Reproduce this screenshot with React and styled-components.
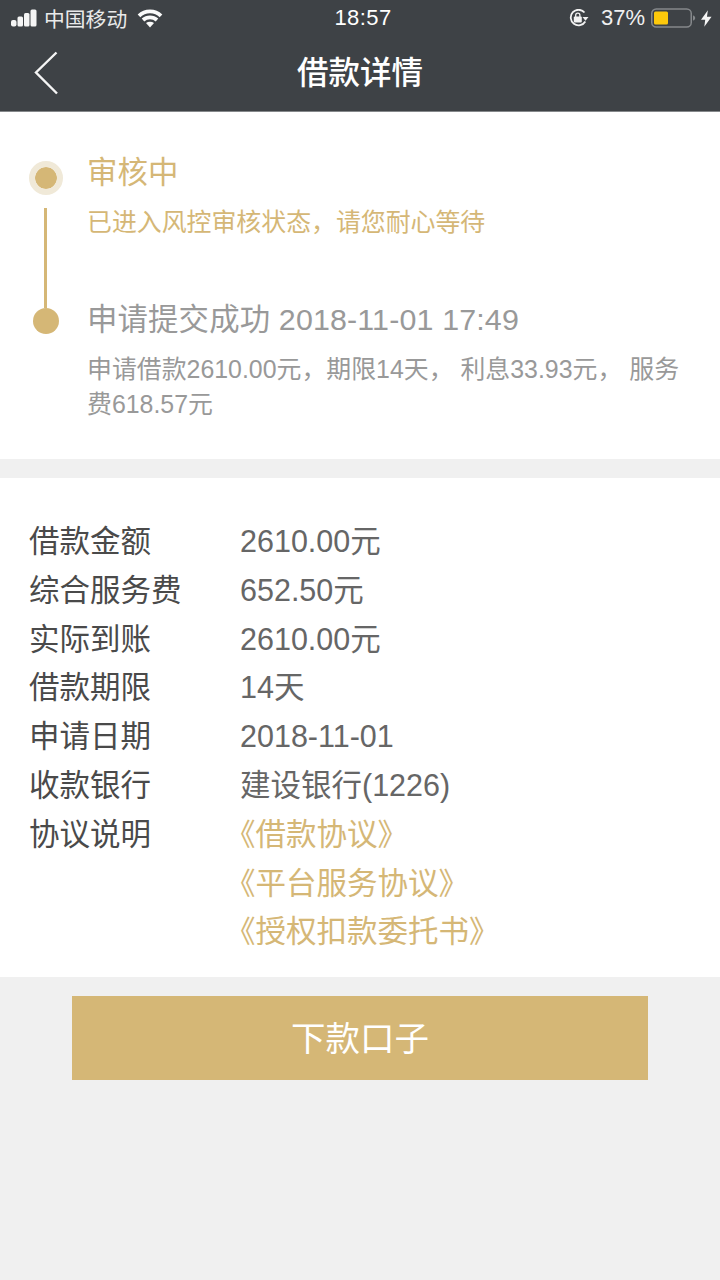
import React from "react";
import styled, { createGlobalStyle } from "styled-components";

const Global = createGlobalStyle`
  html, body { margin: 0; padding: 0; background: #f0f0f0; }
  body { font-family: "Liberation Sans", "Noto Sans CJK SC", sans-serif; }
`;
const Page = styled.div`
  width: 720px; height: 1280px; background: #f0f0f0; overflow: hidden;
  display: flex; flex-direction: column;
`;
const Header = styled.header`
  height: 111px; background: #3e4246; border-bottom: 1px solid #85888b; box-sizing: content-box;
  display: flex; flex-direction: column; color: #fff;
`;
const StatusBar = styled.div`
  height: 36px; display: flex; align-items: center; justify-content: space-between;
  padding: 0 8px 0 10px; position: relative;
`;
const StatusSide = styled.div`
  display: flex; align-items: center;
`;
const Carrier = styled.span`
  margin-left: 6px; margin-right: 10px; color: #e9eaea; font-size: 20.800px;
`;
const Time = styled.span`
  position: absolute; left: 6px; right: 0; text-align: center; font-size: 22px; letter-spacing: .4px; pointer-events: none;
`;
const Percent = styled.span`
  margin-left: 12px; margin-right: 6px; font-size: 22px; color: #f0f0f0;
`;
const NavBar = styled.div`
  flex: 1; display: flex; align-items: center; justify-content: center; position: relative; padding-bottom: 8px;
`;
const BackIcon = styled.svg`
  position: absolute; left: 34px; top: 15px;
`;
const Title = styled.h1`
  margin: 0; font-size: 31.500px; font-weight: 500; color: #fff;
`;
const Card = styled.section`
  background: #fff;
`;
const Timeline = styled(Card)`
  height: 347px; box-sizing: border-box; padding: 40px 30px 0 29px;
`;
const Step = styled.div`
  display: flex; height: ${p => p.$h}px;
`;
const Marker = styled.div`
  width: 34px; flex: none; display: flex; flex-direction: column; align-items: center; margin-right: 25px;
`;
const Dot = styled.span`
  border-radius: 50%; background: #d5b776; flex: none; box-sizing: content-box; margin-top: 9px;
  width: ${p => p.$halo ? 22 : 26}px; height: ${p => p.$halo ? 22 : 26}px;
  ${p => p.$halo && "border: 6px solid #f0e9d8; background-clip: padding-box;"}
`;
const Line = styled.span`
  width: 3.500px; background: #d5b776; height: 100px; margin-top: 13px; margin-left: -1px; flex: none;
`;
const StepBody = styled.div`
  min-width: 0; flex: 1; margin-left: -1px;
`;
const StepTitle = styled.div`
  font-size: 30.400px; line-height: 40px; letter-spacing: .15px; color: ${p => p.$on ? "#d5b776" : "#999"};
`;
const StepText = styled.div`
  font-size: 24.900px; line-height: 35px; color: ${p => p.$on ? "#d5b776" : "#999"}; margin-top: ${p => p.$mt}px;
`;
const Info = styled(Card)`
  height: 499px; box-sizing: border-box; margin-top: 19px; padding: 39px 30px 0;
`;
const Row = styled.div`
  display: grid; grid-template-columns: 210px 1fr; font-size: 30.500px; line-height: 48.800px; color: #666;
`;
const Label = styled.span`
  color: #4a4a4a; margin-left: -1px;
`;
const Links = styled.div`
  display: flex; flex-direction: column; margin-left: -15px; color: #d5b776;
`;
const Button = styled.button`
  display: block; margin: 19px auto 0; width: 576px; height: 84px; border: 0; padding: 0 0 4px; background: #d5b776;
  color: #fff; font: inherit; font-size: 34.500px;
`;

const Signal = () => (
  <svg width="28" height="18" viewBox="0 0 28 18" fill="#f5f5f5">
    <rect x="1" y="11" width="5.500" height="6.500" rx="2" />
    <rect x="7.500" y="7.500" width="5.500" height="10" rx="1.500" />
    <rect x="14" y="4" width="5.500" height="13.500" rx="1.500" />
    <rect x="20.500" y=".5" width="6" height="17" rx="1.500" />
  </svg>
);
const Wifi = () => (
  <svg width="26" height="19" viewBox="0 0 26 19" fill="none" stroke="#fafafa" strokeWidth="3.800">
    <path d="M2 6.800C8 1 18 1 24 6.800" />
    <path d="M6 11C10 7.400 16 7.400 20 11" />
    <path d="M13 18.500l-4-4.500c2.200-1.600 5.800-1.600 8 0z" fill="#fafafa" stroke="none" />
  </svg>
);
const RotationLock = () => (
  <svg width="20" height="18" viewBox="0 0 20 18" fill="none">
    <path d="M16.300 12.500A7.800 7.800 0 1 1 15.500 3.500" stroke="#f2f2f2" strokeWidth="1.800" />
    <path d="M13.500 8h6l-3 3.800z" fill="#f2f2f2" />
    <rect x="4.800" y="7.500" width="8" height="6" rx="1" fill="#f2f2f2" />
    <path d="M6.700 8V6.200a2.100 2.100 0 0 1 4.200 0V8" stroke="#f2f2f2" strokeWidth="1.300" />
  </svg>
);
const Battery = () => (
  <svg width="45" height="20" viewBox="0 0 45 20" fill="none">
    <rect x=".750" y="1" width="39.500" height="18" rx="4.500" stroke="#85888b" strokeWidth="1.500" />
    <rect x="3" y="3.500" width="14" height="13" rx="1.500" fill="#fdc90b" />
    <path d="M42 7.500c1.500.3 2.200 1.300 2.200 2.500s-.7 2.200-2.200 2.500z" fill="#85888b" />
  </svg>
);
const BoltIcon = styled.svg`
  margin-left: 5px;
`;
const Bolt = () => (
  <BoltIcon width="11" height="17" viewBox="0 0 12 18" fill="#f5f5f5">
    <path d="M7.500 0 0 10.300h4.600L3.600 18 11.500 7H6.500z" />
  </BoltIcon>
);

const rows = [
  ["借款金额", "2610.00元"],
  ["综合服务费", "652.50元"],
  ["实际到账", "2610.00元"],
  ["借款期限", "14天"],
  ["申请日期", "2018-11-01"],
  ["收款银行", "建设银行(1226)"],
];
const agreements = ["《借款协议》", "《平台服务协议》", "《授权扣款委托书》"];

export default function App() {
  return (
    <Page>
      <Global />
      <Header>
        <StatusBar>
          <StatusSide>
            <Signal />
            <Carrier>中国移动</Carrier>
            <Wifi />
          </StatusSide>
          <Time>18:57</Time>
          <StatusSide>
            <RotationLock />
            <Percent>37%</Percent>
            <Battery />
            <Bolt />
          </StatusSide>
        </StatusBar>
        <NavBar>
          <BackIcon width="26" height="44" viewBox="0 0 26 44" fill="none" stroke="#f5f5f5" strokeWidth="2.400">
            <path d="M22.500 1.500 2 21.500 23 42.500" />
          </BackIcon>
          <Title>借款详情</Title>
        </NavBar>
      </Header>
      <Timeline>
        <Step $h={147}>
          <Marker>
            <Dot $halo />
            <Line />
          </Marker>
          <StepBody>
            <StepTitle $on>审核中</StepTitle>
            <StepText $on $mt={13}>已进入风控审核状态，请您耐心等待</StepText>
          </StepBody>
        </Step>
        <Step $h={156}>
          <Marker>
            <Dot />
          </Marker>
          <StepBody>
            <StepTitle>申请提交成功 2018-11-01 17:49</StepTitle>
            <StepText $mt={13}>申请借款2610.00元，期限14天， 利息33.93元， 服务费618.57元</StepText>
          </StepBody>
        </Step>
      </Timeline>
      <Info>
        {rows.map(([k, v]) => (
          <Row key={k}>
            <Label>{k}</Label>
            <span>{v}</span>
          </Row>
        ))}
        <Row>
          <Label>协议说明</Label>
          <Links>
            {agreements.map(a => <span key={a}>{a}</span>)}
          </Links>
        </Row>
      </Info>
      <Button>下款口子</Button>
    </Page>
  );
}
